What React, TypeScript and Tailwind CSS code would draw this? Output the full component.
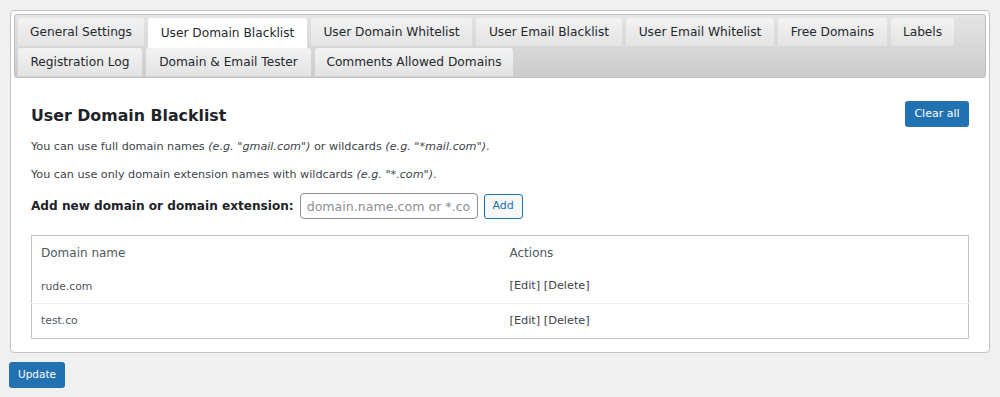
import React from "react";

const rowOne = [
  { label: "General Settings", w: "w-[126px]" },
  { label: "User Domain Blacklist", w: "w-[159px]", active: true },
  { label: "User Domain Whitelist", w: "w-[161px]" },
  { label: "User Email Blacklist", w: "w-[146px]" },
  { label: "User Email Whitelist", w: "w-[148px]" },
  { label: "Free Domains", w: "w-[109px]" },
  { label: "Labels", w: "w-[63px]" },
];
const rowTwo = [
  { label: "Registration Log", w: "w-[124px]" },
  { label: "Domain & Email Tester", w: "w-[165px]" },
  { label: "Comments Allowed Domains", w: "w-[198px]" },
];

const domains = [
  { name: "rude.com", h: "h-[33px]" },
  { name: "test.co", h: "h-[35px]" },
];

function Tab({ label, w, active }: { label: string; w: string; active?: boolean }) {
  return (
    <div
      className={
        active
          ? `${w} h-[30px] -mb-[1px] flex items-center justify-center whitespace-nowrap bg-white rounded-t-[3px] text-[12.2px] text-[#23282d]`
          : `${w} h-[29px] flex items-center justify-center whitespace-nowrap rounded-t-[3px] text-[12.2px] text-[#23282d] bg-gradient-to-b from-[#f3f3f3] to-[#e3e3e3] border-b border-[#d4d4d4]`
      }
    >
      {label}
    </div>
  );
}

export default function App() {
  return (
    <div className="w-[1000px] h-[397px] bg-[#f0f0f1] pt-[10px] px-[10px] font-['DejaVu_Sans',Verdana,sans-serif] text-[#3c434a] overflow-hidden">
      {/* Panel */}
      <div className="w-[980px] border border-[#c3c4c7] rounded-[4px] bg-white p-[3px] pb-[13px]">
        {/* Tab bar */}
        <div className="bg-gradient-to-b from-[#e4e4e4] to-[#cccccc] rounded-[3px] border border-[#c0c0c0] pt-[3px] px-[3px] flex flex-col gap-[1px]">
          <div className="flex gap-[4px]">
            {rowOne.map((t) => (
              <Tab key={t.label} label={t.label} w={t.w} active={t.active} />
            ))}
          </div>
          <div className="flex gap-[4px]">
            {rowTwo.map((t) => (
              <Tab key={t.label} label={t.label} w={t.w} />
            ))}
          </div>
        </div>

        {/* Content */}
        <div className="px-[17px]">
          <div className="flex justify-between items-start mt-[23px]">
            <h2 className="text-[15.8px] font-bold text-[#1d2327] leading-[20px] mt-[5px]">User Domain Blacklist</h2>
            <button className="w-[64px] h-[26px] bg-[#2271b1] text-white text-[11px] rounded-[3px]">Clear all</button>
          </div>

          <p className="text-[11.2px] mt-[12px] leading-[16px]">
            You can use full domain names <i>(e.g. "gmail.com")</i> or wildcards <i>(e.g. "*mail.com")</i>.
          </p>
          <p className="text-[11.2px] mt-[12px] leading-[16px]">
            You can use only domain extension names with wildcards <i>(e.g. "*.com")</i>.
          </p>

          <div className="flex items-center mt-[10px]">
            <label className="text-[12.1px] font-bold text-[#1d2327]">Add new domain or domain extension:</label>
            <input
              className="ml-[6px] w-[178px] h-[26px] border border-[#8c8f94] rounded-[4px] px-[6px] text-[12.6px] text-[#2c3338] placeholder:text-[#8c8f94] outline-none"
              placeholder="domain.name.com or *.com"
            />
            <button className="ml-[6px] w-[39px] h-[25px] border border-[#2271b1] rounded-[3px] bg-[#f6f7f7] text-[#2271b1] text-[11px]">
              Add
            </button>
          </div>

          <table className="w-full mt-[16px] border border-[#c3c4c7] text-[12px] text-[#50575e] border-collapse">
            <thead>
              <tr>
                <th className="text-left font-normal px-[9px] h-[35px] w-[469px]">Domain name</th>
                <th className="text-left font-normal px-[9px] h-[35px]">Actions</th>
              </tr>
            </thead>
            <tbody>
              {domains.map((d, i) => (
                <tr key={d.name} className={i > 0 ? "border-t border-[#f0f0f1]" : ""}>
                  <td className={`px-[9px] ${d.h} text-[10.8px]`}>{d.name}</td>
                  <td className={`px-[9px] ${d.h} text-[11.3px] text-[#3c434a]`}>[Edit] [Delete]</td>
                </tr>
              ))}
            </tbody>
          </table>
        </div>
      </div>

      <button className="mt-[9px] -ml-[1px] w-[56px] h-[26px] bg-[#2271b1] text-white text-[10.5px] rounded-[3px]">Update</button>
    </div>
  );
}
